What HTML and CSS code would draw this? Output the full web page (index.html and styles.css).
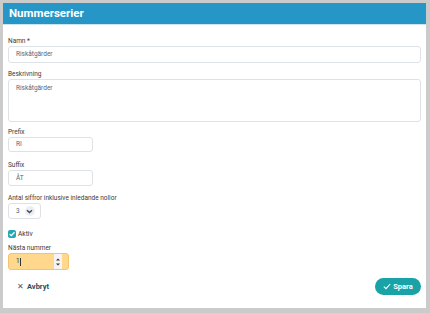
FILE: index.html
```html
<!DOCTYPE html>
<html lang="sv">
<head>
<meta charset="utf-8">
<link rel="stylesheet" href="styles.css">
</head>
<body>
<div class="card">
  <div class="header">Nummerserier</div>
  <form class="form">
    <div class="group g-namn">
      <label class="label">Namn *</label>
      <div class="input wide">Riskåtgärder</div>
    </div>
    <div class="group g-besk">
      <label class="label">Beskrivning</label>
      <div class="input wide area">Riskåtgärder</div>
    </div>
    <div class="group g-prefix">
      <label class="label">Prefix</label>
      <div class="input short">RI</div>
    </div>
    <div class="group g-suffix">
      <label class="label">Suffix</label>
      <div class="input short tall">ÅT</div>
    </div>
    <div class="group g-antal">
      <label class="label">Antal siffror inklusive inledande nollor</label>
      <div class="input select"><span>3</span><span class="chev"><svg width="7" height="5" viewBox="0 0 7 5"><path d="M1 1.2 L3.5 3.6 L6 1.2" fill="none" stroke="#3b4a5a" stroke-width="1.4"/></svg></span></div>
    </div>
    <div class="check-row">
      <span class="checkbox"><svg width="8" height="8" viewBox="0 0 8 8"><path d="M1.6 4.1 L3.3 5.7 L6.5 2.3" fill="none" stroke="#fff" stroke-width="1.3"/></svg></span>
      <span class="check-label">Aktiv</span>
    </div>
    <div class="group g-nasta">
      <label class="label">Nästa nummer</label>
      <div class="input number"><span class="val">1<span class="caret"></span></span><span class="spin"><svg width="6" height="12" viewBox="0 0 6 12"><path d="M1 4.5 L3 2.5 L5 4.5 Z M1 7.5 L3 9.5 L5 7.5 Z" fill="#333"/></svg></span></div>
    </div>
    <div class="actions">
      <span class="cancel"><span class="x">✕</span>Avbryt</span>
      <span class="save"><svg width="8" height="7" viewBox="0 0 8 7"><path d="M0.8 3.6 L3 5.7 L7.2 1" fill="none" stroke="#fff" stroke-width="1.1"/></svg>Spara</span>
    </div>
  </form>
</div>
</body>
</html>
```
FILE: styles.css
```css
html, body { margin: 0; padding: 0; }
body {
  background: #cbcbcb;
  width: 430px;
  height: 313px;
  padding: 3px 4px 0 3px;
  box-sizing: border-box;
  font-family: Roboto, "Liberation Sans", Arial, sans-serif;
}
.card {
  background: #fff;
  height: 305px;
}
.header {
  background: #2596c6;
  color: #fff;
  font-weight: 700;
  font-size: 11.5px;
  height: 21px;
  line-height: 21px;
  padding-left: 6px;
  border-bottom: 1px solid #cfe3ee;
}
.form {
  padding: 12px 5px 0 5px;
  display: flex;
  flex-direction: column;
}
.group { display: flex; flex-direction: column; }
.g-besk { margin-top: 7px; }
.g-prefix { margin-top: 6px; }
.g-suffix { margin-top: 9px; }
.g-antal { margin-top: 8px; }
.g-nasta { margin-top: 6px; }
.label {
  font-size: 6.5px;
  line-height: 9px;
  color: #3a3a3a;
}
.input {
  border: 1px solid #dde2e6;
  border-radius: 3px;
  font-size: 6.5px;
  color: #56657a;
  box-sizing: border-box;
  height: 17px;
  line-height: 15px;
  padding-left: 7px;
  display: flex;
  align-items: center;
}
.wide { width: 413px; }
.area { height: 43px; align-items: flex-start; padding-top: 1px; }
.short { width: 85px; height: 15px; }
.tall { height: 16px; }
.select { width: 33px; height: 16px; padding-left: 7px; gap: 5px; }
.chev {
  width: 10px; height: 10px; border-radius: 50%;
  background: #eceef1;
  display: flex; align-items: center; justify-content: center;
}
.check-row { display: flex; align-items: center; margin-top: 11px; height: 8px; }
.checkbox {
  width: 8px; height: 8px; border-radius: 2px;
  background: #25a7b5;
  display: flex; align-items: center; justify-content: center;
}
.check-label { font-size: 6.6px; color: #333; margin-left: 2px; }
.number {
  width: 61px; height: 17px;
  background: #ffd88e;
  border-color: #f3c46c;
  justify-content: space-between;
  padding-right: 0;
}
.val { display: flex; align-items: center; color: #333; }
.caret { display: inline-block; width: 1px; height: 8px; background: #333; margin-left: 0.5px; }
.spin {
  width: 8px; height: 15px;
  background: #f4f4f4;
  display: flex; align-items: center; justify-content: center;
  margin-right: 6px;
}
.actions {
  display: flex;
  justify-content: space-between;
  align-items: center;
  margin-top: 8px;
}
.cancel {
  font-size: 7.5px;
  font-weight: 700;
  color: #2e4a62;
  margin-left: 9px;
  display: flex; align-items: center;
}
.cancel .x { font-weight: 400; margin-right: 3px; color: #556; }
.save {
  background: #1aa3a6;
  color: #fff;
  font-size: 7.5px;
  font-weight: 700;
  border-radius: 9px;
  height: 17px;
  width: 46px;
  display: flex; align-items: center; justify-content: center; gap: 2px;
}
```
